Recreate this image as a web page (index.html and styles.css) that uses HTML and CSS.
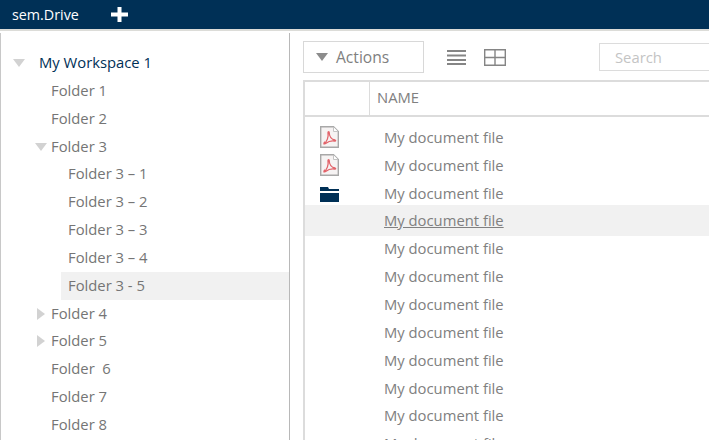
FILE: index.html
```html
<!DOCTYPE html>
<html lang="en">
<head>
<meta charset="utf-8">
<title>sem.Drive</title>
<link rel="stylesheet" href="styles.css">
</head>
<body>
<header class="topbar">
  <span class="brand">sem.Drive</span>
  <svg class="plus" width="17" height="15" viewBox="0 0 17 15"><path d="M6.500 0h4v5.500H17v4h-6.500V15h-4V9.500H0v-4h6.500z" fill="#fff"/></svg>
</header>
<main class="app">
  <nav class="tree">
    <div class="row root"><span class="caret down"></span>My Workspace 1</div>
    <div class="row l1">Folder 1</div>
    <div class="row l1">Folder 2</div>
    <div class="row l1"><span class="caret down"></span>Folder 3</div>
    <div class="row l2">Folder 3 – 1</div>
    <div class="row l2">Folder 3 – 2</div>
    <div class="row l2">Folder 3 – 3</div>
    <div class="row l2">Folder 3 – 4</div>
    <div class="row l2 selected">Folder 3 - 5</div>
    <div class="row l1"><span class="caret right"></span>Folder 4</div>
    <div class="row l1"><span class="caret right"></span>Folder 5</div>
    <div class="row l1">Folder&nbsp; 6</div>
    <div class="row l1">Folder 7</div>
    <div class="row l1">Folder 8</div>
  </nav>
  <section class="content">
    <div class="toolbar">
      <button class="actions"><span class="caret-dark"></span>Actions</button>
      <svg class="tool-list" width="19" height="17" viewBox="0 0 19 17"><path d="M0 2h19M0 6.500h19M0 11h19M0 15h19" stroke="#858585" stroke-width="2.200" fill="none"/></svg>
      <svg class="tool-grid" width="22" height="17" viewBox="0 0 22 17"><path d="M.7.700h20.600v15.600H.7zM11 .7v15.600M.7 8.500h20.600" stroke="#858585" stroke-width="1.400" fill="none"/></svg>
      <div class="search">Search</div>
    </div>
    <div class="table">
      <div class="thead"><div class="th-icon"></div><div class="th-name">NAME</div></div>
      <div class="tbody">
        <div class="file"><span class="ficon"><svg width="19" height="22" viewBox="0 0 19 22"><path d="M.7.700h12.800l4.800 4.800v15.800H.7z" fill="#f6f3f3" stroke="#a8a8a8" stroke-width="1.400"/><path d="M13.500 1v4.500h4.500" fill="#fff" stroke="#c4c4c4"/><path d="M4 17.500c3-1.500 4.700-6.500 4-11 0-1.200 1.200-1.200 1.200 0 0 4 2.500 7 5.800 7.500 1 .3.700 1.200-.3 1-3-.5-6.200 .2-8.700 2.200-1.300 1-2.300.5-2-.0z" fill="none" stroke="#e2636a" stroke-width="1.300"/></svg></span><span class="fname">My document file</span></div>
        <div class="file"><span class="ficon"><svg width="19" height="22" viewBox="0 0 19 22"><path d="M.7.700h12.800l4.800 4.800v15.800H.7z" fill="#f6f3f3" stroke="#a8a8a8" stroke-width="1.400"/><path d="M13.500 1v4.500h4.500" fill="#fff" stroke="#c4c4c4"/><path d="M4 17.500c3-1.500 4.700-6.500 4-11 0-1.200 1.200-1.200 1.200 0 0 4 2.500 7 5.800 7.500 1 .3.700 1.200-.3 1-3-.5-6.200 .2-8.700 2.200-1.300 1-2.300.5-2-.0z" fill="none" stroke="#e2636a" stroke-width="1.300"/></svg></span><span class="fname">My document file</span></div>
        <div class="file"><span class="ficon"><svg class="folder" width="19" height="15" viewBox="0 0 19 15"><path d="M0 0h8l1 2h10v2H0z" fill="#003056"/><path d="M0 6h19v9H0z" fill="#003056"/></svg></span><span class="fname">My document file</span></div>
        <div class="file hover"><span class="ficon"></span><span class="fname">My document file</span></div>
        <div class="file"><span class="ficon"></span><span class="fname">My document file</span></div>
        <div class="file"><span class="ficon"></span><span class="fname">My document file</span></div>
        <div class="file"><span class="ficon"></span><span class="fname">My document file</span></div>
        <div class="file"><span class="ficon"></span><span class="fname">My document file</span></div>
        <div class="file"><span class="ficon"></span><span class="fname">My document file</span></div>
        <div class="file"><span class="ficon"></span><span class="fname">My document file</span></div>
        <div class="file"><span class="ficon"></span><span class="fname">My document file</span></div>
        <div class="file"><span class="ficon"></span><span class="fname">My document file</span></div>
      </div>
    </div>
  </section>
</main>
</body>
</html>
```
FILE: styles.css
```css
* { box-sizing: border-box; }
html, body { margin: 0; height: 100%; overflow: hidden; background: #fff; }
body { font-family: "Open Sans", "Noto Sans", sans-serif; font-size: 14.800px; color: #757575; display: flex; flex-direction: column; }
.topbar { flex: none; height: 31px; background: #003056; border-bottom: 2px solid #dcdcd8; display: flex; align-items: center; color: #fff; padding-left: 12px; gap: 24px; }
.brand { font-size: 14.300px; }
.plus { margin-top: -1px; margin-left: 8px; }
.app { flex: 1; display: flex; min-height: 0; }
.tree { flex: none; width: 290px; padding: 16px 0 0 0; border-left: 1px solid #c8c8c8; border-right: 1px solid #b8b8b8; margin-top: 2px; }
.row { position: relative; height: 27.850px; line-height: 27.850px; white-space: nowrap; }
.root { padding-left: 38px; color: #003056; }
.l1 { padding-left: 50px; }
.l2 { margin-left: 60px; padding-left: 7px; }
.selected { background: #f1f1f1; }
.caret { position: absolute; width: 0; height: 0; }
.caret.down { border-left: 6px solid transparent; border-right: 6px solid transparent; border-top: 8px solid #d2d2d2; top: 10px; }
.root .caret.down { left: 12px; }
.l1 .caret.down { left: 34px; }
.caret.right { border-top: 6px solid transparent; border-bottom: 6px solid transparent; border-left: 8px solid #d2d2d2; left: 36px; top: 8px; }
.content { flex: 1; min-width: 0; padding: 10px 0 0 13px; overflow: hidden; }
.toolbar { display: flex; align-items: center; height: 32px; position: relative; }
.actions { flex: none; width: 121px; height: 32px; border: 1px solid #d8d8d8; background: #fff; font: inherit; font-size: 15.600px; color: #808080; display: flex; align-items: center; padding: 0 0 0 12px; gap: 8px; }
.caret-dark { width: 0; height: 0; border-left: 6px solid transparent; border-right: 6px solid transparent; border-top: 8px solid #8c8c8c; }
.tool-list { flex: none; margin-left: 23px; }
.tool-grid { flex: none; margin-left: 18px; }
.search { width: 120px; height: 28px; margin-left: 93px; flex: none; border: 1px solid #dcdcdc; color: #c4c4c4; line-height: 26px; padding-left: 15px; }
.table { margin-top: 7px; border-left: 2px solid #dcdcdc; }
.thead { display: flex; height: 37px; border-top: 2px solid #dcdcdc; border-bottom: 2px solid #dcdcdc; }
.th-icon { width: 65px; flex: none; border-right: 1px solid #dcdcdc; }
.th-name { padding-left: 7px; line-height: 31px; color: #808080; }
.tbody { padding-top: 6px; color: #808080; }
.file { display: flex; align-items: center; height: 27.850px; }
.ficon { width: 79px; flex: none; padding-left: 15px; display: flex; align-items: center; }
.folder { margin-top: 3px; }
.file.hover { background: #f1f1f1; height: 31px; margin: -2px 0 -1.150px; }
.file.hover .fname { text-decoration: underline; }
```
